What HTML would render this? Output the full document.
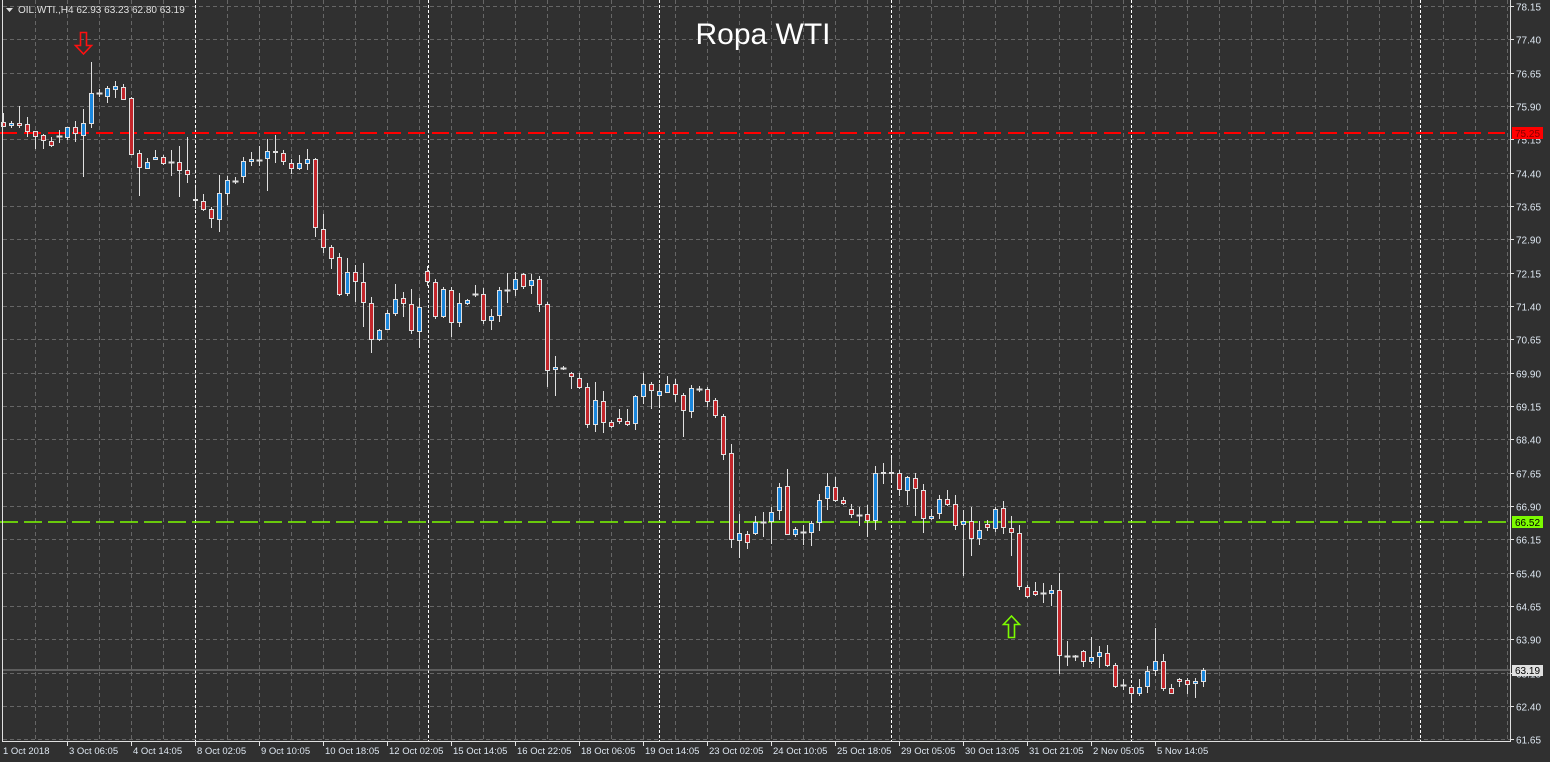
<!DOCTYPE html>
<html><head><meta charset="utf-8"><style>
html,body{margin:0;padding:0;background:#303030;overflow:hidden}
svg{display:block}
text{font-family:"Liberation Sans",sans-serif}
</style></head><body>
<svg id="s" width="1550" height="762" xmlns="http://www.w3.org/2000/svg">
<rect width="1550" height="762" fill="#303030"/>
<g id="grid"></g>
<line x1="0" y1="133" x2="1510" y2="133" stroke="#ff0000" stroke-width="2" stroke-dasharray="17,7"/>
<line x1="0" y1="522" x2="1510" y2="522" stroke="#7cfc00" stroke-width="1.5" stroke-dasharray="18,6"/>
<line x1="3" y1="670" x2="1510" y2="670" stroke="#8a8a8a" stroke-width="1"/>
<g id="candles"></g>
<line x1="2.5" y1="0" x2="2.5" y2="741" stroke="#e0e0e0"/>
<line x1="1510.5" y1="0" x2="1510.5" y2="741.5" stroke="#e0e0e0"/>
<line x1="2" y1="741.5" x2="1511" y2="741.5" stroke="#e0e0e0"/>
<g id="axis"></g>
<rect x="1512" y="127" width="31" height="12" fill="#ff0000"/>
<text x="1515" y="137" font-size="10" fill="#800000">75.25</text>
<rect x="1512" y="516" width="31" height="12" fill="#7cfc00"/>
<text x="1515" y="526" font-size="10" fill="#000">66.52</text>
<rect x="1512" y="665" width="31" height="11" fill="#e0e0e0"/>
<text x="1515" y="674" font-size="10" fill="#000">63.19</text>
<path d="M80.5 32.5h6v13h5l-8 8.5l-8-8.5h5z" fill="none" stroke="#ff1010" stroke-width="1.6"/>
<path d="M1008.5 637.5h6v-13h5l-8-8.5l-8 8.5h5z" fill="none" stroke="#7cfc00" stroke-width="1.6"/>
<text x="763" y="44" font-size="30" fill="#ffffff" text-anchor="middle">Ropa WTI</text>
<path d="M6 8h7l-3.5 4z" fill="#e0e0e0"/>
<text x="18" y="13" font-size="10" fill="#e0e0e0">OIL.WTI.,H4  62.93 63.23 62.80 63.19</text>
</svg>
<script>
var NS="http://www.w3.org/2000/svg";
function el(p,t,a,txt){var e=document.createElementNS(NS,t);for(var k in a)e.setAttribute(k,a[k]);if(txt!=null)e.textContent=txt;p.appendChild(e);return e;}
var g=document.getElementById('grid'),ax=document.getElementById('axis'),cg=document.getElementById('candles');
for(var i=0;i<=22;i++){var y=Math.round(6+i*33.33)+0.5;
 el(g,'line',{x1:3,y1:y,x2:1510,y2:y,stroke:'#666','stroke-dasharray':'4,3'});
 var p=(78.15-i*0.75).toFixed(2);
 el(ax,'line',{x1:1510,y1:y,x2:1514,y2:y,stroke:'#e0e0e0'});
 el(ax,'text',{x:1516,y:y+4,'font-size':10,fill:'#dde6f0'},p);}
for(var x=35;x<1510;x+=32){el(g,'line',{x1:x+0.5,y1:0,x2:x+0.5,y2:741,stroke:'#666','stroke-dasharray':'4,3'});}
[195,428,659,891,1131,1420].forEach(function(x){el(g,'line',{x1:x+0.5,y1:0,x2:x+0.5,y2:741,stroke:'#ffffff','stroke-dasharray':'3,2'});});
var labs=["1 Oct 2018","3 Oct 06:05","4 Oct 14:05","8 Oct 02:05","9 Oct 10:05","10 Oct 18:05","12 Oct 02:05","15 Oct 14:05","16 Oct 22:05","18 Oct 06:05","19 Oct 14:05","23 Oct 02:05","24 Oct 10:05","25 Oct 18:05","29 Oct 05:05","30 Oct 13:05","31 Oct 21:05","2 Nov 05:05","5 Nov 14:05"];
labs.forEach(function(t,i){var x=3+64*i;if(i>0)el(ax,'line',{x1:x+0.5,y1:741,x2:x+0.5,y2:746,stroke:'#e0e0e0'});
 el(ax,'text',{x:x+(i?2:0),y:754,'font-size':9.5,fill:'#dde6f0'},t);});
var D=[[122,126,113,127],[125,123,121,128],[123,125,106,128],[124,131,117,137],[131,136,131,149],[135,140,134,149],[141,145,137,147],[136,136,130,143],[137,127,127,140],[127,133,121,142],[135,123,109,177],[123,93,62,128],[93,93,89,97],[96,88,86,103],[89,86,81,98],[87,99,84,100],[98,154,97,155],[153,167,150,196],[168,162,158,169],[159,157,150,160],[157,163,155,165],[162,162,150,176],[162,170,146,197],[170,174,137,183],
[199,200,188,209],[201,209,194,211],[209,218,207,228],[219,193,175,232],[193,180,176,205],[181,181,177,184],[176,161,157,183],[161,159,152,166],[160,160,146,166],[158,151,139,191],[151,152,135,163],[153,161,150,165],[163,168,159,174],[168,163,155,170],[163,159,149,170],[159,227,158,237],[229,247,214,253],[247,258,245,269],[257,294,253,296],[293,272,258,296],[272,281,265,302],[282,302,263,327],[303,339,297,353],[339,330,329,341],[329,313,310,330],[313,299,284,316],[298,303,292,317],[304,330,289,334],[331,307,298,348],[271,281,266,286],[282,316,279,319],[316,289,287,318],[290,322,287,337],[322,303,293,327],[303,300,299,305],[294,294,285,297],[294,320,288,324],[320,316,309,330],[315,290,287,322],[290,290,273,303],[289,279,272,296],[274,286,273,289],[285,280,274,294],[279,304,276,312],[304,370,302,387],[369,367,356,396],[368,368,366,370],[373,376,372,389],[378,387,373,389],[387,424,383,428],[424,400,382,432],[401,422,391,433],[422,426,420,428],[418,421,409,424],[421,424,409,426],[423,396,395,430],[396,384,373,404],[384,390,382,409],[395,391,384,405],[392,384,376,393],[384,394,379,402],[395,410,393,437],[411,388,385,418],[389,389,386,392],[389,401,387,407],[400,415,398,418],[416,454,414,460],[453,539,444,548],[540,533,514,558],[534,542,531,549],[533,522,516,535],[522,522,512,537],[521,512,507,544],[510,487,483,520],[486,534,469,535],[534,529,527,537],[532,532,525,545],[532,523,521,546],[522,500,494,531],[498,486,473,510],[487,500,477,502],[500,503,497,505],[509,514,504,518],[515,515,507,526],[514,520,505,537],[520,473,466,530],[473,472,463,484],[472,473,458,480],
[473,489,470,496],[490,477,476,505],[478,488,473,516],[490,518,484,533],[518,516,509,520],[513,499,495,519],[499,504,490,506],[504,525,495,530],[524,521,510,576],[521,538,507,556],[538,530,521,545],[524,527,520,531],[528,509,507,532],[508,527,501,534],[528,532,516,556],[533,586,525,590],[587,596,585,598],[591,594,582,596],[593,593,583,603],[593,590,585,606],[590,655,573,674],[656,656,641,666],[656,656,655,661],[651,661,650,667],[661,657,637,664],[656,652,646,668],[653,665,645,667],[665,686,663,688],[685,685,679,690],[687,693,686,700],[693,687,679,696],[686,671,666,693],[670,661,628,676],[661,688,654,691],[688,693,684,694],[679,681,678,687],[680,684,678,694],[683,681,678,698],[681,670,668,687]];
D.forEach(function(d,k){var cx=3+8*k+0.5,o=d[0],c=d[1],h=d[2],l=d[3];
 el(cg,'line',{x1:cx,y1:h,x2:cx,y2:l,stroke:'#e0e0e0'});
 if(Math.abs(o-c)<1){el(cg,'line',{x1:cx-3,y1:o+0.5,x2:cx+3,y2:o+0.5,stroke:'#e0e0e0','stroke-width':2});}
 else{var t=Math.min(o,c),b=Math.max(o,c);
  el(cg,'rect',{x:cx-2,y:t+0.5,width:4,height:b-t,fill:c<o?'#1a86dc':'#c4262b',stroke:'#e0e0e0','stroke-width':1});}
});
</script>
</body></html>
